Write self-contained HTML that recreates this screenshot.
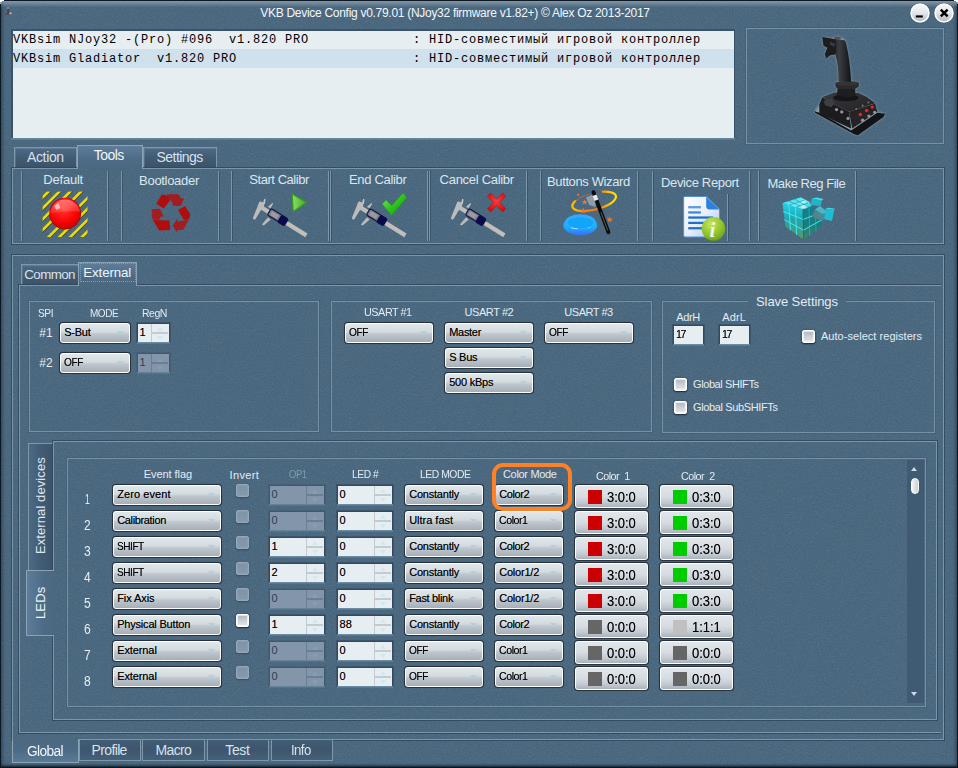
<!DOCTYPE html>
<html lang="en">
<head>
<meta charset="utf-8">
<title>VKB Device Config v0.79.01</title>
<style>
html,body{margin:0;padding:0;}
body{width:958px;height:768px;overflow:hidden;background:#4b687f;font-family:"Liberation Sans",Arial,sans-serif;}
#win{position:relative;width:958px;height:768px;overflow:hidden;background:#4b687f;}
#win div,#win svg,#win span.t{position:absolute;box-sizing:border-box;}
#win span.t{white-space:pre;transform-origin:0 0;display:block;}
.pn{border:1px solid #7b96ab;box-shadow:0 0 0 1px rgba(48,72,94,.85);}
.gb{border:1px solid #7690a5;box-shadow:0 0 0 1px rgba(58,82,104,.35);}
.vs{width:1px;background:#7b95a9;box-shadow:1px 0 0 rgba(48,72,94,.6);}
.tab{border:1px solid #7d96aa;border-bottom:none;background:linear-gradient(#4d6a85 0%,#425c75 45%,#3b5369 100%);box-shadow:inset 1px 1px 0 rgba(150,175,195,.25);}
.tabs{border:1px solid #8ca3b6;border-bottom:none;background:linear-gradient(#5d7d9a 0%,#4d6b86 60%,#4b687f 100%);}
.btab{border:1px solid #7d96aa;border-top:none;background:linear-gradient(#425c75 0%,#3d566d 50%,#45617a 100%);}
.btabs{border:1px solid #8ca3b6;border-top:none;background:linear-gradient(#4b687f 0%,#4d6b86 50%,#5a7a97 100%);}
.cb{border:1px solid rgba(22,33,45,.9);border-radius:4px;background:linear-gradient(#e2e9ec 0%,#d3dade 46%,#c0c7ce 54%,#a3abb5 100%);box-shadow:inset 0 0 0 1px rgba(255,255,255,.95),0 0 .8px rgba(14,24,34,.35);}
.ar{width:0;height:0;border-left:3.5px solid transparent;border-right:3.5px solid transparent;border-top:4px solid #b3d0de;}
.bt{border:1px solid rgba(22,33,45,.9);border-radius:4px;background:linear-gradient(#e1e7eb 0%,#d6dce1 50%,#c2c9d0 76%,#a4acb6 100%);box-shadow:inset 0 0 0 1px rgba(255,255,255,.95),0 0 .8px rgba(14,24,34,.35);}
.ed{background:#e7eef1;box-shadow:-1px -1px 0 1px #3b5369,0 2px 0 0 #6b8ba1,1px 0 0 0 #3b5369;}
.edd{background:#8fa3b5;box-shadow:-1px -1px 0 1px rgba(50,75,98,.6),0 2px 0 0 rgba(107,139,161,.8);}
.ck{border-radius:2px;background:linear-gradient(#7f93a7,#8599ac);border:1px solid #95a8b9;box-shadow:inset 0 0 1px .5px rgba(150,170,187,.7),0 1px 1.5px rgba(25,42,60,.45);}
.ckw{border-radius:2px;background:linear-gradient(#a8b1ba,#c9ced4 45%,#e3e6e9);border:1px solid #fff;box-shadow:inset 0 0 1px 1px rgba(255,255,255,.75),0 1px 1.5px rgba(18,30,44,.8),0 0 1.5px rgba(18,30,44,.6);}
#win span.m{font-family:"Liberation Mono","Courier New",monospace;}

</style>
</head>
<body>
<div id="win">
<svg style="left:0;top:0" width="958" height="768"><defs><filter id="nzw" x="0" y="0" width="100%" height="100%"><feTurbulence type="fractalNoise" baseFrequency="0.75" numOctaves="2" seed="7"/><feColorMatrix type="matrix" values="0 0 0 0 1  0 0 0 0 1  0 0 0 0 1  0.2 0 0 0 -0.1"/></filter><filter id="nzb" x="0" y="0" width="100%" height="100%"><feTurbulence type="fractalNoise" baseFrequency="0.75" numOctaves="2" seed="7"/><feColorMatrix type="matrix" values="0 0 0 0 0  0 0 0 0 0.05  0 0 0 0 0.1  -0.4 0 0 0 0.2"/></filter></defs><rect width="958" height="768" filter="url(#nzw)"/><rect width="958" height="768" filter="url(#nzb)"/></svg>
<div style="left:0px;top:0px;width:958px;height:768px;box-shadow:inset 0 0 0 1px #0c1822,inset 0 0 4px 1px rgba(8,18,28,.75);"></div>
<div style="left:1px;top:1px;width:956px;height:6px;background:linear-gradient(rgba(200,215,228,.55),rgba(200,215,228,0));"></div>
<div style="left:0px;top:764px;width:958px;height:4px;background:linear-gradient(rgba(10,22,32,0),rgba(10,22,32,.25) 40%,rgba(10,22,32,.95));"></div>
<div style="left:0px;top:0px;width:4px;height:1px;background:#fff;"></div>
<div style="left:0px;top:1px;width:2px;height:1px;background:#fff;"></div>
<div style="left:0px;top:2px;width:1px;height:2px;background:#8fb4e6;"></div>
<div style="left:954px;top:0px;width:4px;height:1px;background:#fff;"></div>
<div style="left:956px;top:1px;width:2px;height:1px;background:#fff;"></div>
<div style="left:957px;top:2px;width:1px;height:2px;background:#8fb4e6;"></div>
<svg style="left:5px;top:7px" width="8" height="9" viewBox="0 0 8 9"><rect x="2" y="0" width="2" height="2" fill="#8a8080"/><rect x="2.6" y="2" width="1" height="4" fill="#2a2a2a"/><path d="M0.5 6h6v1.6h-6z" fill="#6a4038"/><rect x="4.5" y="5.6" width="2" height="1.6" fill="#d8d0d0"/></svg>
<span class="t" style="left:260.30px;top:6.00px;font-size:12px;line-height:14px;color:#f3f7fa;letter-spacing:-0.290px;">VKB Device Config v0.79.01 (NJoy32 firmware v1.82+) © Alex Oz 2013-2017</span>
<svg style="left:908.8px;top:1.5px" width="22" height="22" viewBox="0 0 22 22"><defs><linearGradient id="gm" x1="0" y1="0" x2="0" y2="1"><stop offset="0" stop-color="#f4f5f7"/><stop offset=".5" stop-color="#e4e7ea"/><stop offset="1" stop-color="#b2b9c1"/></linearGradient></defs><circle cx="11" cy="11" r="10.3" fill="rgba(30,48,66,.35)"/><circle cx="11" cy="11" r="9.75" fill="#fdfdfd"/><circle cx="11" cy="11" r="8.2" fill="url(#gm)"/><rect x="6.8" y="13.4" width="7" height="2.1" fill="#000"/></svg>
<svg style="left:932.9px;top:1.5px" width="22" height="22" viewBox="0 0 22 22"><defs><linearGradient id="gx" x1="0" y1="0" x2="0" y2="1"><stop offset="0" stop-color="#f4f5f7"/><stop offset=".5" stop-color="#e4e7ea"/><stop offset="1" stop-color="#b2b9c1"/></linearGradient></defs><circle cx="11" cy="11" r="10.3" fill="rgba(30,48,66,.35)"/><circle cx="11" cy="11" r="9.75" fill="#fdfdfd"/><circle cx="11" cy="11" r="8.2" fill="url(#gx)"/><path d="M7.8 7.6 L14.6 14.4 M14.6 7.6 L7.8 14.4" stroke="#000" stroke-width="2.5" stroke-linecap="butt"/></svg>
<div style="left:11px;top:29px;width:724px;height:110px;background:#3b5369;"></div>
<div style="left:11px;top:138px;width:724px;height:2px;background:linear-gradient(#6a8ba1,#587890);"></div>
<div style="left:13px;top:31px;width:721px;height:107px;background:#e7eef1;"></div>
<div style="left:13px;top:49px;width:721px;height:19px;background:#cfe1ec;"></div>
<span class="t m" style="left:13px;top:33px;font-size:12px;letter-spacing:0.8px;line-height:14px;color:#000;">VKBsim NJoy32 -(Pro) #096  v1.820 PRO             : HID-совместимый игровой контроллер</span>
<span class="t m" style="left:13px;top:52px;font-size:12px;letter-spacing:0.8px;line-height:14px;color:#000;">VKBsim Gladiator  v1.820 PRO                      : HID-совместимый игровой контроллер</span>
<div class="gb" style="left:746px;top:28px;width:198px;height:116px;"></div>
<svg style="left:800px;top:28px" width="100" height="117" viewBox="0 0 958 1121">
<defs><filter id="gl" x="-10%" y="-10%" width="120%" height="120%"><feGaussianBlur stdDeviation="10"/></filter>
<linearGradient id="jg" x1="0" y1="0" x2="1" y2="0"><stop offset="0" stop-color="#19191b"/><stop offset=".4" stop-color="#3b3d42"/><stop offset=".7" stop-color="#26272a"/><stop offset="1" stop-color="#121214"/></linearGradient>
<linearGradient id="jt" x1="0" y1="0" x2="1" y2="1"><stop offset="0" stop-color="#3a3a3e"/><stop offset="1" stop-color="#222225"/></linearGradient></defs>
<g fill="#c8d6e0" filter="url(#gl)" opacity=".5">
<path d="M140 797L185 735L215 662L330 617L560 622L640 662L720 722L740 802L815 822L800 852L555 1027L520 1017L145 812Z"/>
<path d="M213 86L300 100L330 92L365 80L400 95L435 118L445 160Q478 300 490 510L565 525L562 560L528 585L532 645L560 662L560 700L320 700L320 655L352 640L360 585L340 560L338 525L370 510Q370 350 340 255L290 262L250 292L238 250L262 190L225 170Z"/>
</g>
<path d="M140 797L185 812L490 982L740 812L815 822L800 852L555 1027L520 1017L145 812Z" fill="#131315"/>
<path d="M185 732L215 664L330 732L470 802L490 962L185 822Z" fill="#1c1c1f"/>
<path d="M470 802L720 724L740 802L500 962Z" fill="#242427"/>
<path d="M215 662L330 617L560 622L640 662L720 722L470 802L330 732Z" fill="url(#jt)"/>
<path d="M225 700L300 672L330 720L300 760L240 740Z" fill="#3e3f44"/>
<ellipse cx="440" cy="668" rx="122" ry="34" fill="#151517"/>
<path d="M352 640L360 585L528 585L532 645Q440 690 352 640Z" fill="#1e1e21"/>
<path d="M338 525L565 525L562 560L528 585L360 585L340 560Z" fill="#2a2a2d"/>
<ellipse cx="452" cy="530" rx="113" ry="22" fill="#343438"/>
<path d="M300 150L330 100L432 120L445 160Q478 300 490 515L370 515Q370 350 340 255Z" fill="url(#jg)"/>
<path d="M213 86L300 100L340 110L345 200L340 255L290 262L250 292L238 250L262 190L225 170Z" fill="#1d1d1f"/>
<path d="M290 130L335 150L330 180L285 160Z" fill="#3a3b40"/>
<ellipse cx="360" cy="97" rx="33" ry="15" fill="#505257"/>
<g fill="#8d959f"><circle cx="350" cy="782" r="16"/><circle cx="400" cy="804" r="16"/><circle cx="460" cy="866" r="15"/><circle cx="600" cy="884" r="17"/><circle cx="660" cy="844" r="16"/><circle cx="715" cy="808" r="15"/>
<circle cx="540" cy="776" r="10" fill="#6d747d"/><circle cx="600" cy="744" r="10" fill="#6d747d"/><circle cx="655" cy="714" r="10" fill="#6d747d"/></g>
<g fill="#ee2222"><circle cx="578" cy="828" r="17"/><circle cx="638" cy="791" r="17"/><circle cx="692" cy="758" r="16"/></g>
</svg>

<div class="tab" style="left:14px;top:147px;width:63px;height:21px;"></div>
<div class="tab" style="left:143px;top:147px;width:74px;height:21px;"></div>
<div class="pn" style="left:12px;top:168px;width:932px;height:76px;"></div>
<div class="tabs" style="left:77px;top:145px;width:66px;height:24px;"></div>
<span class="t" style="left:27.00px;top:149.00px;font-size:14px;line-height:16px;color:#d8e2eb;letter-spacing:-0.365px;">Action</span>
<span class="t" style="left:93.80px;top:147.00px;font-size:14px;line-height:16px;color:#f0f5f9;letter-spacing:-0.546px;">Tools</span>
<span class="t" style="left:156.50px;top:149.00px;font-size:14px;line-height:16px;color:#d8e2eb;letter-spacing:-0.541px;">Settings</span>
<div class="vs" style="left:21px;top:171px;width:1px;height:70px;"></div>
<div class="vs" style="left:107px;top:171px;width:1px;height:70px;"></div>
<div class="vs" style="left:121px;top:171px;width:1px;height:70px;"></div>
<div class="vs" style="left:218px;top:171px;width:1px;height:70px;"></div>
<div class="vs" style="left:231px;top:171px;width:1px;height:70px;"></div>
<div class="vs" style="left:328px;top:171px;width:1px;height:70px;"></div>
<div class="vs" style="left:330px;top:171px;width:1px;height:70px;"></div>
<div class="vs" style="left:427px;top:171px;width:1px;height:70px;"></div>
<div class="vs" style="left:429px;top:171px;width:1px;height:70px;"></div>
<div class="vs" style="left:526px;top:171px;width:1px;height:70px;"></div>
<div class="vs" style="left:540px;top:171px;width:1px;height:70px;"></div>
<div class="vs" style="left:637px;top:171px;width:1px;height:70px;"></div>
<div class="vs" style="left:652px;top:171px;width:1px;height:70px;"></div>
<div class="vs" style="left:749px;top:171px;width:1px;height:70px;"></div>
<div class="vs" style="left:758px;top:171px;width:1px;height:70px;"></div>
<div class="vs" style="left:855px;top:171px;width:1px;height:70px;"></div>
<div class="vs" style="left:727px;top:194px;width:1px;height:47px;"></div>
<span class="t" style="left:43.30px;top:172.00px;font-size:13px;line-height:15px;color:#dbe6ee;letter-spacing:-0.213px;">Default</span>
<span class="t" style="left:139.10px;top:173.00px;font-size:13px;line-height:15px;color:#dbe6ee;letter-spacing:-0.306px;">Bootloader</span>
<span class="t" style="left:249.30px;top:172.00px;font-size:13px;line-height:15px;color:#dbe6ee;letter-spacing:-0.454px;">Start Calibr</span>
<span class="t" style="left:349.00px;top:172.00px;font-size:13px;line-height:15px;color:#dbe6ee;letter-spacing:-0.319px;">End Calibr</span>
<span class="t" style="left:439.60px;top:172.00px;font-size:13px;line-height:15px;color:#dbe6ee;letter-spacing:-0.292px;">Cancel Calibr</span>
<span class="t" style="left:547.00px;top:174.00px;font-size:13px;line-height:15px;color:#dbe6ee;letter-spacing:-0.378px;">Buttons Wizard</span>
<span class="t" style="left:661.00px;top:175.00px;font-size:13px;line-height:15px;color:#dbe6ee;letter-spacing:-0.355px;">Device Report</span>
<span class="t" style="left:767.50px;top:176.00px;font-size:13px;line-height:15px;color:#dbe6ee;letter-spacing:-0.465px;">Make Reg File</span>
<svg style="left:30px;top:185px" width="80" height="60" viewBox="0 0 958 718">
<defs>
<clipPath id="hz"><rect x="150" y="78" width="540" height="545"/></clipPath>
<radialGradient id="rb" cx="0.45" cy="0.35" r="0.75"><stop offset="0" stop-color="#ff3a30"/><stop offset=".55" stop-color="#fb0505"/><stop offset="1" stop-color="#b80000"/></radialGradient>
<linearGradient id="rbh" x1="0" y1="0" x2="0" y2="1"><stop offset="0" stop-color="#fff" stop-opacity=".4"/><stop offset="1" stop-color="#fff" stop-opacity=".08"/></linearGradient>
</defs>
<g clip-path="url(#hz)" stroke-linecap="butt">
<g stroke="#3d3a10" stroke-width="38" transform="translate(3,4)">
<path d="M100 200L300 0M100 330L430 0M100 460L560 0M100 590L690 0M110 735L720 125M240 735L720 255M370 735L720 385M510 735L720 525"/>
</g>
<g stroke="#ecdb05" stroke-width="32">
<path d="M100 200L300 0M100 330L430 0M100 460L560 0M100 590L690 0M110 735L720 125M240 735L720 255M370 735L720 385M510 735L720 525"/>
</g>
</g>
<circle cx="421" cy="342" r="190" fill="#8a0a0a"/>
<circle cx="421" cy="340" r="184" fill="url(#rb)"/>
<path d="M245 330 A180 180 0 0 1 600 320 Q420 300 245 345Z" fill="url(#rbh)"/>
<path d="M290 250L340 215L365 275L315 300Z" fill="#fff" fill-opacity=".6"/>
</svg>
<svg style="left:130px;top:185px" width="80" height="60" viewBox="0 0 958 718">
<g fill="#b20d0d">
<path d="M378 118Q420 112 448 128Q472 150 482 178L405 282L315 228Z"/>
<path d="M575 300L660 250L718 345Q722 365 714 392L660 420L640 410Z"/>
<path d="M275 420L475 425L480 540L350 545Z"/>
</g>
<g fill="#a11d20">
<path d="M440 110L580 110L610 160L650 155L605 250L500 245L515 225L478 165Z"/>
<path d="M715 392L640 535L570 540L565 572L512 487L565 405L570 437L660 422Z"/>
<path d="M255 290L355 285L402 375L366 380L350 415L275 415L260 370L268 320Z"/>
</g>
</svg>
<svg style="left:240px;top:185px" width="80" height="60" viewBox="0 0 958 718">
<g>
<path d="M262 272L795 603" stroke="#c2beba" stroke-width="52"/>
<path d="M262 290L780 612" stroke="#aaa6a4" stroke-width="8" stroke-dasharray="4 14"/>
<path d="M240 195L292 215L285 282L250 302L180 415L155 405L160 380L205 270L225 215Z" fill="#bcbcbc"/>
<path d="M290 165L306 172L298 226L276 218Z" fill="#c6c6c6"/>
<path d="M388 215L397 225L366 276L334 262Z" fill="#c2c2c2"/>
<path d="M336 385L368 412L285 486L262 472Z" fill="#bababa"/>
<g transform="translate(425,366) rotate(32)">
<rect x="-88" y="-45" width="180" height="90" rx="22" fill="#7c7c88" stroke="#15153f" stroke-width="14"/>
<rect x="-62" y="-26" width="95" height="52" rx="6" fill="#9a9aa4"/>
<rect x="55" y="-52" width="105" height="108" rx="26" fill="#0b0b4c"/>
</g>
</g>
<defs><linearGradient id="pl" x1="0" y1="0" x2="1" y2="0"><stop offset="0" stop-color="#8fdc6a"/><stop offset="1" stop-color="#3fae1d"/></linearGradient></defs>
<path d="M625 108L792 210L638 318Z" fill="url(#pl)" stroke="#38a018" stroke-width="14" stroke-linejoin="round"/>
</svg>
<svg style="left:339px;top:185px" width="80" height="60" viewBox="0 0 958 718">
<g>
<path d="M262 272L795 603" stroke="#c2beba" stroke-width="52"/>
<path d="M262 290L780 612" stroke="#aaa6a4" stroke-width="8" stroke-dasharray="4 14"/>
<path d="M240 195L292 215L285 282L250 302L180 415L155 405L160 380L205 270L225 215Z" fill="#bcbcbc"/>
<path d="M290 165L306 172L298 226L276 218Z" fill="#c6c6c6"/>
<path d="M388 215L397 225L366 276L334 262Z" fill="#c2c2c2"/>
<path d="M336 385L368 412L285 486L262 472Z" fill="#bababa"/>
<g transform="translate(425,366) rotate(32)">
<rect x="-88" y="-45" width="180" height="90" rx="22" fill="#7c7c88" stroke="#15153f" stroke-width="14"/>
<rect x="-62" y="-26" width="95" height="52" rx="6" fill="#9a9aa4"/>
<rect x="55" y="-52" width="105" height="108" rx="26" fill="#0b0b4c"/>
</g>
</g>
<g transform="translate(12,0)"><defs><linearGradient id="ck" x1="0" y1="0" x2="1" y2="1"><stop offset="0" stop-color="#7be868"/><stop offset=".5" stop-color="#2fc41c"/><stop offset="1" stop-color="#138c08"/></linearGradient></defs>
<path d="M505 228L550 180L620 245L755 97L800 150L618 365Z" fill="url(#ck)" stroke="#1c9a10" stroke-width="6" stroke-linejoin="round"/></g>
</svg>
<svg style="left:438px;top:185px" width="80" height="60" viewBox="0 0 958 718">
<g>
<path d="M262 272L795 603" stroke="#c2beba" stroke-width="52"/>
<path d="M262 290L780 612" stroke="#aaa6a4" stroke-width="8" stroke-dasharray="4 14"/>
<path d="M240 195L292 215L285 282L250 302L180 415L155 405L160 380L205 270L225 215Z" fill="#bcbcbc"/>
<path d="M290 165L306 172L298 226L276 218Z" fill="#c6c6c6"/>
<path d="M388 215L397 225L366 276L334 262Z" fill="#c2c2c2"/>
<path d="M336 385L368 412L285 486L262 472Z" fill="#bababa"/>
<g transform="translate(425,366) rotate(32)">
<rect x="-88" y="-45" width="180" height="90" rx="22" fill="#7c7c88" stroke="#15153f" stroke-width="14"/>
<rect x="-62" y="-26" width="95" height="52" rx="6" fill="#9a9aa4"/>
<rect x="55" y="-52" width="105" height="108" rx="26" fill="#0b0b4c"/>
</g>
</g>
<g transform="translate(24,0)"><defs><radialGradient id="xr" cx=".5" cy=".4" r=".7"><stop offset="0" stop-color="#ff3a3a"/><stop offset="1" stop-color="#d30606"/></radialGradient></defs>
<path d="M568 133L606 97L677 170L748 97L788 133L715 208L788 283L748 322L677 246L606 322L568 283L640 208Z" fill="url(#xr)" stroke="#b80808" stroke-width="6" stroke-linejoin="round"/></g>
</svg>
<svg style="left:550px;top:185px" width="80" height="60" viewBox="0 0 958 718">
<defs>
<linearGradient id="rg" x1="0" y1="0" x2="1" y2="0"><stop offset="0" stop-color="#ffc000"/><stop offset=".3" stop-color="#ff8a00"/><stop offset=".6" stop-color="#ff7200"/><stop offset=".85" stop-color="#ffc800"/><stop offset="1" stop-color="#ffe600"/></linearGradient>
<linearGradient id="dk" x1="0" y1="0" x2="0" y2="1"><stop offset="0" stop-color="#2aa6ff"/><stop offset=".6" stop-color="#1ab0ff"/><stop offset="1" stop-color="#3d6df2"/></linearGradient>
<linearGradient id="wd" x1="0" y1="0" x2="1" y2="0"><stop offset="0" stop-color="#000"/><stop offset=".6" stop-color="#555"/><stop offset="1" stop-color="#111"/></linearGradient>
</defs>
<ellipse cx="362" cy="482" rx="203" ry="118" fill="url(#dk)"/>
<ellipse cx="365" cy="442" rx="180" ry="92" fill="#2fadff"/>
<ellipse cx="365" cy="452" rx="152" ry="66" fill="#12a6fa"/>
<path d="M255 512Q290 528 325 524" stroke="#d8f0ff" stroke-width="9" fill="none" stroke-linecap="round"/><circle cx="468" cy="510" r="7" fill="#d8f0ff"/>
<path d="M430 150L520 110L548 190L545 262L470 240Z" fill="#aab4be" fill-opacity=".7"/>
<path d="M631 79A268 100 -14 1 1 303 192" fill="none" stroke="url(#rg)" stroke-width="26" stroke-linecap="round"/><path d="M303 192A268 100 -14 0 1 470 108" fill="none" stroke="#e07a18" stroke-width="9" stroke-linecap="round" stroke-opacity=".8"/>
<path d="M520 85L700 565" stroke="#0c0c0c" stroke-width="46" stroke-linecap="round"/>
<path d="M612 330L690 540" stroke="#666" stroke-width="10" stroke-linecap="round"/>
<path d="M533 122L556 182" stroke="#e9e9e9" stroke-width="50"/>
<g fill="#f0742a">
<path d="M415 170L424 192L448 194L430 210L436 234L415 221L394 234L400 210L382 194L406 192Z"/>
<path d="M400 272L410 296L436 298L416 315L422 340L400 326L378 340L384 315L364 298L390 296Z"/>
<path d="M715 375L726 400L754 402L733 420L739 447L715 432L691 447L697 420L676 402L704 400Z"/>
<circle cx="336" cy="118" r="13"/>
</g>
</svg>
<svg style="left:660px;top:185px" width="80" height="60" viewBox="0 0 958 718">
<defs>
<linearGradient id="pg" x1="0" y1="0" x2="1" y2="1"><stop offset="0" stop-color="#ffffff"/><stop offset=".5" stop-color="#e8eff9"/><stop offset="1" stop-color="#a9c4ea"/></linearGradient>
<radialGradient id="gb" cx=".4" cy=".3" r=".8"><stop offset="0" stop-color="#c6e85c"/><stop offset=".6" stop-color="#8fc02a"/><stop offset="1" stop-color="#5f9618"/></radialGradient>
</defs>
<path d="M300 138H555L712 290V605Q712 622 695 622H300Q283 622 283 605V155Q283 138 300 138Z" fill="url(#pg)" stroke="#4a90e2" stroke-width="12"/>
<path d="M553 142L708 292H590Q553 292 553 255Z" fill="#2e80da"/>
<g fill="#1c6fd2">
<rect x="338" y="252" width="152" height="28" fill="#5c9ce0"/>
<rect x="338" y="315" width="152" height="27" fill="#3f88dc"/>
<rect x="338" y="376" width="298" height="27"/>
<rect x="338" y="440" width="200" height="27"/>
<rect x="338" y="504" width="180" height="27"/>
</g>
<ellipse cx="640" cy="655" rx="110" ry="14" fill="#4a8a1a" fill-opacity=".6"/>
<circle cx="640" cy="525" r="141" fill="url(#gb)"/>
<text x="592" y="620" font-family="'Liberation Serif',serif" font-style="italic" font-weight="bold" font-size="255" fill="#f2f2ee">i</text>
</svg>
<svg style="left:770px;top:185px" width="80" height="60" viewBox="0 0 958 718">
<defs>
<linearGradient id="c1" x1="0" y1="0" x2="0" y2="1"><stop offset="0" stop-color="#20d4e8"/><stop offset=".45" stop-color="#27a3aa"/><stop offset="1" stop-color="#56996a"/></linearGradient>
<linearGradient id="c2" x1="0" y1="0" x2="0" y2="1"><stop offset="0" stop-color="#10808f"/><stop offset=".6" stop-color="#1d7c7c"/><stop offset="1" stop-color="#3c8a6c"/></linearGradient>
<linearGradient id="c3" x1="0" y1="0" x2="1" y2="1"><stop offset="0" stop-color="#1fd0e6"/><stop offset=".55" stop-color="#6ff2fa"/><stop offset="1" stop-color="#1fbfd4"/></linearGradient>
<radialGradient id="c4" cx=".5" cy=".5" r=".5"><stop offset="0" stop-color="#fff" stop-opacity=".95"/><stop offset="1" stop-color="#fff" stop-opacity="0"/></radialGradient>
</defs>
<path d="M150 215L395 292L402 652L185 497Z" fill="url(#c1)"/>
<path d="M395 292L500 250L618 430L615 492L402 652Z" fill="url(#c2)"/>
<path d="M150 215L368 146L470 200L500 250L395 292Z" fill="url(#c3)"/>
<g stroke="#0e8496" stroke-width="9" stroke-opacity=".7" fill="none">
<path d="M232 241L412 181M313 266L456 215M223 192L430 278M295 169L465 264"/>
</g>
<ellipse cx="402" cy="262" rx="58" ry="30" fill="url(#c4)"/>
<ellipse cx="400" cy="205" rx="40" ry="20" fill="url(#c4)" opacity=".8"/>
<g stroke="#38f2fb" stroke-width="12" fill="none" stroke-opacity=".9">
<path d="M160 318L398 412L612 330"/><path d="M172 415L400 540L615 420"/>
<path d="M225 240L245 540"/><path d="M305 265L318 595"/>
</g>
<g stroke="#2bd0dc" stroke-width="8" fill="none" stroke-opacity=".7"><path d="M468 268L474 600M545 345L550 545"/></g>
<path d="M395 292L402 652" stroke="#0a5a66" stroke-width="8" stroke-opacity=".8"/>
<path d="M500 160L622 185L605 252L485 240Z" fill="#22b5ca"/>
<path d="M500 160L560 150L640 168L622 185Z" fill="#3fdcec"/>
<path d="M540 290L600 252L692 330L632 432L505 377Z" fill="#3f8fa0"/>
<path d="M505 377L540 290L632 432Z" fill="#5b8088"/>
<path d="M540 290L600 252L692 330L625 345Z" fill="#4fb4c6"/>
<path d="M665 280L770 295L742 432L650 410Z" fill="#1fbcd2"/>
<path d="M665 280L700 272L775 285L770 295Z" fill="#45deee"/>
</svg>

<div class="pn" style="left:12px;top:255px;width:932px;height:485px;"></div>
<div class="btabs" style="left:12px;top:739px;width:67px;height:24px;"></div>
<div class="btab" style="left:79px;top:740px;width:62px;height:21px;"></div>
<div class="btab" style="left:142px;top:740px;width:63px;height:21px;"></div>
<div class="btab" style="left:207px;top:740px;width:62px;height:21px;"></div>
<div class="btab" style="left:271px;top:740px;width:62px;height:21px;"></div>
<span class="t" style="left:27.30px;top:743.00px;font-size:14px;line-height:16px;color:#f0f5f9;letter-spacing:-0.630px;transform:scaleX(0.9810);">Global</span>
<span class="t" style="left:91.50px;top:742.00px;font-size:14px;line-height:16px;color:#d8e2eb;letter-spacing:-0.630px;">Profile</span>
<span class="t" style="left:155.50px;top:742.00px;font-size:14px;line-height:16px;color:#d8e2eb;letter-spacing:-0.630px;">Macro</span>
<span class="t" style="left:225.30px;top:742.00px;font-size:14px;line-height:16px;color:#d8e2eb;letter-spacing:-0.362px;">Test</span>
<span class="t" style="left:291.36px;top:742.00px;font-size:14px;line-height:16px;color:#d8e2eb;letter-spacing:-0.630px;transform:scaleX(0.9431);">Info</span>
<div class="tab" style="left:21px;top:264px;width:58px;height:21px;"></div>
<div class="pn" style="left:19px;top:285px;width:922px;height:448px;border-right:none;clip-path:inset(-1px 0 -1px -1px);"></div>
<div class="tabs" style="left:78px;top:262px;width:59px;height:24px;"></div>
<div style="left:80px;top:263px;width:56px;height:19px;border:1px dotted #c48a62;"></div>
<span class="t" style="left:24.30px;top:267.00px;font-size:13.333px;line-height:15px;color:#d8e2eb;letter-spacing:-0.591px;">Common</span>
<span class="t" style="left:83.30px;top:265.00px;font-size:13.333px;line-height:15px;color:#f0f5f9;letter-spacing:-0.133px;">External</span>
<div class="gb" style="left:29px;top:301px;width:290px;height:131px;"></div>
<span class="t" style="left:38.30px;top:307.00px;font-size:11px;line-height:12px;color:#e3ecf3;letter-spacing:-0.495px;transform:scaleX(0.9290);">SPI</span>
<span class="t" style="left:89.50px;top:307.00px;font-size:11px;line-height:12px;color:#e3ecf3;letter-spacing:-0.495px;transform:scaleX(0.9077);">MODE</span>
<span class="t" style="left:142.00px;top:307.00px;font-size:11px;line-height:12px;color:#e3ecf3;letter-spacing:-0.495px;transform:scaleX(0.9553);">RegN</span>
<span class="t" style="left:39.30px;top:326.00px;font-size:12px;line-height:14px;color:#e3ecf3;letter-spacing:0.026px;">#1</span>
<span class="t" style="left:39.30px;top:356.00px;font-size:12px;line-height:14px;color:#e3ecf3;letter-spacing:0.026px;">#2</span>
<div class="cb" style="left:59px;top:322px;width:72px;height:22px;"></div><div class="ar" style="left:117px;top:331px;width:7px;height:4px;"></div><span class="t" style="left:64.20px;top:326.00px;font-size:11px;line-height:12px;color:#000;letter-spacing:-0.239px;text-shadow:0 0 .4px rgba(0,0,0,.5);">S-But</span>
<div class="cb" style="left:59px;top:352px;width:72px;height:22px;"></div><div class="ar" style="left:117px;top:361px;width:7px;height:4px;"></div><span class="t" style="left:64.20px;top:356.00px;font-size:11px;line-height:12px;color:#000;letter-spacing:-0.495px;text-shadow:0 0 .4px rgba(0,0,0,.5);transform:scaleX(0.9208);">OFF</span>
<div style="left:137px;top:323px;width:33px;height:19px;background:#34495d;box-shadow:0 0 0 1px rgba(46,68,90,.5);"></div><div style="left:137px;top:342px;width:33px;height:1px;background:#6b8ca3;box-shadow:0 1px 0 rgba(107,140,163,.45);"></div><div style="left:138px;top:324px;width:31px;height:18px;background:#e7eef1;"></div><div style="left:151px;top:324px;width:1px;height:18px;background:#c3cbcf;"></div><div style="left:152px;top:332px;width:16px;height:2px;background:#c3cbcf;"></div><div style="left:157px;top:327px;width:7px;height:4px;border-left:3.5px solid transparent;border-right:3.5px solid transparent;border-bottom:4px solid #cfe8f2;width:0;height:0;"></div><div style="left:157px;top:336px;width:7px;height:4px;border-left:3.5px solid transparent;border-right:3.5px solid transparent;border-top:4px solid #cfe8f2;width:0;height:0;"></div><span class="t" style="left:139.60px;top:326.00px;font-size:11px;line-height:12px;color:#000;text-shadow:0 0 .4px rgba(0,0,0,.5);">1</span>
<div style="left:137px;top:353px;width:33px;height:19px;background:rgba(52,76,98,.55);box-shadow:0 0 0 1px rgba(52,76,98,.25);"></div><div style="left:137px;top:372px;width:33px;height:1px;background:rgba(110,142,164,.75);box-shadow:0 1px 0 rgba(110,142,164,.3);"></div><div style="left:138px;top:354px;width:31px;height:18px;background:#8396a9;"></div><div style="left:151px;top:354px;width:1px;height:18px;background:rgba(60,85,108,.35);"></div><div style="left:152px;top:362px;width:16px;height:2px;background:rgba(60,85,108,.35);"></div><div style="left:157px;top:358px;width:7px;height:4px;border-left:3.5px solid transparent;border-right:3.5px solid transparent;border-bottom:4px solid rgba(150,180,200,.28);width:0;height:0;"></div><div style="left:157px;top:366px;width:7px;height:4px;border-left:3.5px solid transparent;border-right:3.5px solid transparent;border-top:4px solid rgba(150,180,200,.28);width:0;height:0;"></div><span class="t" style="left:139.60px;top:356.00px;font-size:11px;line-height:12px;color:#2b3d52;">1</span>
<div class="gb" style="left:331px;top:301px;width:321px;height:131px;"></div>
<span class="t" style="left:364.30px;top:306.00px;font-size:11px;line-height:12px;color:#e3ecf3;letter-spacing:-0.495px;transform:scaleX(0.9879);">USART #1</span>
<span class="t" style="left:464.50px;top:306.00px;font-size:11px;line-height:12px;color:#e3ecf3;letter-spacing:-0.422px;">USART #2</span>
<span class="t" style="left:564.30px;top:306.00px;font-size:11px;line-height:12px;color:#e3ecf3;letter-spacing:-0.465px;">USART #3</span>
<div class="cb" style="left:344px;top:322px;width:90px;height:22px;"></div><div class="ar" style="left:420px;top:331px;width:7px;height:4px;"></div><span class="t" style="left:349.20px;top:326.00px;font-size:11px;line-height:12px;color:#000;letter-spacing:-0.495px;text-shadow:0 0 .4px rgba(0,0,0,.5);transform:scaleX(0.9208);">OFF</span>
<div class="cb" style="left:444px;top:322px;width:90px;height:22px;"></div><div class="ar" style="left:520px;top:331px;width:7px;height:4px;"></div><span class="t" style="left:449.20px;top:326.00px;font-size:11px;line-height:12px;color:#000;letter-spacing:-0.291px;text-shadow:0 0 .4px rgba(0,0,0,.5);">Master</span>
<div class="cb" style="left:444px;top:347px;width:90px;height:22px;"></div><div class="ar" style="left:520px;top:356px;width:7px;height:4px;"></div><span class="t" style="left:449.20px;top:351.00px;font-size:11px;line-height:12px;color:#000;letter-spacing:-0.262px;text-shadow:0 0 .4px rgba(0,0,0,.5);">S Bus</span>
<div class="cb" style="left:444px;top:372px;width:90px;height:22px;"></div><div class="ar" style="left:520px;top:381px;width:7px;height:4px;"></div><span class="t" style="left:449.20px;top:376.00px;font-size:11px;line-height:12px;color:#000;letter-spacing:-0.223px;text-shadow:0 0 .4px rgba(0,0,0,.5);">500 kBps</span>
<div class="cb" style="left:544px;top:322px;width:90px;height:22px;"></div><div class="ar" style="left:620px;top:331px;width:7px;height:4px;"></div><span class="t" style="left:549.20px;top:326.00px;font-size:11px;line-height:12px;color:#000;letter-spacing:-0.495px;text-shadow:0 0 .4px rgba(0,0,0,.5);transform:scaleX(0.9208);">OFF</span>
<div class="gb" style="left:662px;top:301px;width:273px;height:132px;"></div>
<div style="left:748px;top:298px;width:98px;height:8px;background:#4b687f;"></div>
<span class="t" style="left:756.00px;top:294.00px;font-size:13px;line-height:15px;color:#e3ecf3;letter-spacing:-0.085px;">Slave Settings</span>
<span class="t" style="left:676.20px;top:311.00px;font-size:11px;line-height:12px;color:#e3ecf3;letter-spacing:-0.339px;">AdrH</span>
<span class="t" style="left:722.20px;top:311.00px;font-size:11px;line-height:12px;color:#e3ecf3;letter-spacing:0.127px;">AdrL</span>
<div style="left:673px;top:325px;width:31px;height:19px;background:#34495d;box-shadow:0 0 0 1px rgba(46,68,90,.5);"></div><div style="left:673px;top:344px;width:31px;height:1px;background:#6b8ca3;box-shadow:0 1px 0 rgba(107,140,163,.45);"></div><div style="left:674px;top:326px;width:29px;height:18px;background:#e7eef1;"></div>
<span class="t" style="left:675.90px;top:328.00px;font-size:11px;line-height:12px;color:#000;letter-spacing:-1.320px;text-shadow:0 0 .4px rgba(0,0,0,.5);transform:scaleX(0.9632);">17</span>
<div style="left:719px;top:325px;width:31px;height:19px;background:#34495d;box-shadow:0 0 0 1px rgba(46,68,90,.5);"></div><div style="left:719px;top:344px;width:31px;height:1px;background:#6b8ca3;box-shadow:0 1px 0 rgba(107,140,163,.45);"></div><div style="left:720px;top:326px;width:29px;height:18px;background:#e7eef1;"></div>
<span class="t" style="left:721.90px;top:328.00px;font-size:11px;line-height:12px;color:#000;letter-spacing:-1.320px;text-shadow:0 0 .4px rgba(0,0,0,.5);transform:scaleX(0.9632);">17</span>
<div class="ckw" style="left:802px;top:330px;width:13px;height:13px;"></div>
<span class="t" style="left:821.00px;top:330.00px;font-size:11px;line-height:12px;color:#e3ecf3;letter-spacing:0.037px;">Auto-select registers</span>
<div class="ckw" style="left:674px;top:378px;width:13px;height:13px;"></div>
<span class="t" style="left:693.00px;top:378.00px;font-size:11px;line-height:12px;color:#e3ecf3;letter-spacing:-0.409px;">Global SHIFTs</span>
<div class="ckw" style="left:674px;top:401px;width:13px;height:13px;"></div>
<span class="t" style="left:693.00px;top:401.00px;font-size:11px;line-height:12px;color:#e3ecf3;letter-spacing:-0.365px;">Global SubSHIFTs</span>
<div style="left:28px;top:443px;width:26px;height:128px;border:1px solid #7d96aa;border-right:none;background:linear-gradient(90deg,#4d6a85 0%,#425c75 45%,#3b5369 100%);"></div>
<div class="pn" style="left:53px;top:441px;width:884px;height:279px;"></div>
<div style="left:26px;top:570px;width:28px;height:66px;border:1px solid #8ca3b6;border-right:none;background:linear-gradient(90deg,#5d7d9a 0%,#4d6b86 60%,#4b687f 100%);"></div>
<span class="t" style="left:32.5px;top:553.6px;font-size:13px;line-height:16px;letter-spacing:0.09px;color:#dde7ef;transform:rotate(-90deg);transform-origin:0 0;">External devices</span>
<span class="t" style="left:32.5px;top:618.7px;font-size:13px;line-height:16px;letter-spacing:0.13px;color:#eef3f7;transform:rotate(-90deg);transform-origin:0 0;">LEDs</span>
<div class="gb" style="left:67px;top:458px;width:859px;height:249px;"></div>
<div style="left:907px;top:460px;width:17px;height:243px;background:#3f5a72;"></div>
<div style="left:911px;top:467px;width:7px;height:4px;border-left:3.5px solid transparent;border-right:3.5px solid transparent;border-bottom:4px solid #c5dbe8;width:0;height:0;"></div>
<div style="left:911px;top:692px;width:7px;height:4px;border-left:3.5px solid transparent;border-right:3.5px solid transparent;border-top:4px solid #c5dbe8;width:0;height:0;"></div>
<div style="left:910.5px;top:478px;width:8.5px;height:15.5px;border-radius:4.5px;background:linear-gradient(90deg,#f2f4f6,#c9cfd6);border:1px solid #fff;"></div>
<span class="t" style="left:143.80px;top:468.00px;font-size:11px;line-height:12px;color:#e3ecf3;letter-spacing:-0.067px;">Event flag</span>
<span class="t" style="left:229.60px;top:469.00px;font-size:11px;line-height:12px;color:#e3ecf3;letter-spacing:0.349px;">Invert</span>
<span class="t" style="left:288.80px;top:468.00px;font-size:11px;line-height:12px;color:#7f9bb0;letter-spacing:-0.495px;transform:scaleX(0.8611);">OP1</span>
<span class="t" style="left:352.00px;top:468.00px;font-size:11px;line-height:12px;color:#e3ecf3;letter-spacing:-0.495px;transform:scaleX(0.9330);">LED #</span>
<span class="t" style="left:420.00px;top:468.00px;font-size:11px;line-height:12px;color:#e3ecf3;letter-spacing:-0.495px;transform:scaleX(0.9412);">LED MODE</span>
<span class="t" style="left:503.00px;top:468.00px;font-size:11px;line-height:12px;color:#e3ecf3;letter-spacing:-0.327px;">Color Mode</span>
<span class="t" style="left:595.50px;top:470.00px;font-size:11px;line-height:12px;color:#e3ecf3;letter-spacing:-0.495px;transform:scaleX(0.9733);">Color  1</span>
<span class="t" style="left:680.50px;top:470.00px;font-size:11px;line-height:12px;color:#e3ecf3;letter-spacing:-0.495px;transform:scaleX(0.9733);">Color  2</span>
<span class="t" style="left:84.59px;top:491.00px;font-size:14px;line-height:16px;color:#e6eef4;transform:scaleX(0.6143);">1</span>
<div class="cb" style="left:112px;top:484px;width:110px;height:22px;"></div><div class="ar" style="left:208px;top:493px;width:7px;height:4px;"></div><span class="t" style="left:117.20px;top:488.00px;font-size:11px;line-height:12px;color:#000;letter-spacing:0.075px;text-shadow:0 0 .4px rgba(0,0,0,.5);">Zero event</span>
<div class="ck" style="left:236px;top:484px;width:13px;height:13px;"></div>
<div style="left:269px;top:485px;width:56px;height:19px;background:rgba(52,76,98,.55);box-shadow:0 0 0 1px rgba(52,76,98,.25);"></div><div style="left:269px;top:504px;width:56px;height:1px;background:rgba(110,142,164,.75);box-shadow:0 1px 0 rgba(110,142,164,.3);"></div><div style="left:270px;top:486px;width:54px;height:18px;background:#8396a9;"></div><div style="left:306px;top:486px;width:1px;height:18px;background:rgba(60,85,108,.35);"></div><div style="left:307px;top:494px;width:16px;height:2px;background:rgba(60,85,108,.35);"></div><div style="left:312px;top:490px;width:7px;height:4px;border-left:3.5px solid transparent;border-right:3.5px solid transparent;border-bottom:4px solid rgba(150,180,200,.28);width:0;height:0;"></div><div style="left:312px;top:498px;width:7px;height:4px;border-left:3.5px solid transparent;border-right:3.5px solid transparent;border-top:4px solid rgba(150,180,200,.28);width:0;height:0;"></div><span class="t" style="left:271.60px;top:488.00px;font-size:11px;line-height:12px;color:#2b3d52;">0</span>
<div style="left:337px;top:485px;width:56px;height:19px;background:#34495d;box-shadow:0 0 0 1px rgba(46,68,90,.5);"></div><div style="left:337px;top:504px;width:56px;height:1px;background:#6b8ca3;box-shadow:0 1px 0 rgba(107,140,163,.45);"></div><div style="left:338px;top:486px;width:54px;height:18px;background:#e7eef1;"></div><div style="left:374px;top:486px;width:1px;height:18px;background:#c3cbcf;"></div><div style="left:375px;top:494px;width:16px;height:2px;background:#c3cbcf;"></div><div style="left:380px;top:489px;width:7px;height:4px;border-left:3.5px solid transparent;border-right:3.5px solid transparent;border-bottom:4px solid #cfe8f2;width:0;height:0;"></div><div style="left:380px;top:498px;width:7px;height:4px;border-left:3.5px solid transparent;border-right:3.5px solid transparent;border-top:4px solid #cfe8f2;width:0;height:0;"></div><span class="t" style="left:339.60px;top:488.00px;font-size:11px;line-height:12px;color:#000;text-shadow:0 0 .4px rgba(0,0,0,.5);">0</span>
<div class="cb" style="left:404px;top:484px;width:80px;height:22px;"></div><div class="ar" style="left:470px;top:493px;width:7px;height:4px;"></div><span class="t" style="left:409.20px;top:488.00px;font-size:11px;line-height:12px;color:#000;letter-spacing:-0.219px;text-shadow:0 0 .4px rgba(0,0,0,.5);">Constantly</span>
<div class="cb" style="left:494px;top:484px;width:70px;height:22px;"></div><div class="ar" style="left:550px;top:493px;width:7px;height:4px;"></div><span class="t" style="left:499.20px;top:488.00px;font-size:11px;line-height:12px;color:#000;letter-spacing:-0.397px;text-shadow:0 0 .4px rgba(0,0,0,.5);">Color2</span>
<div class="bt" style="left:574px;top:484px;width:75px;height:25px;"></div><div style="left:588px;top:490px;width:14px;height:14px;background:#cc0000;"></div><span class="t" style="left:607.00px;top:489.04px;font-size:13px;line-height:15px;color:#000;letter-spacing:-0.021px;text-shadow:0 0 .4px rgba(0,0,0,.5);transform:scale(1.0000,1.0800);">3:0:0</span>
<div class="bt" style="left:659px;top:484px;width:75px;height:25px;"></div><div style="left:673px;top:490px;width:14px;height:14px;background:#00cc00;"></div><span class="t" style="left:692.00px;top:489.04px;font-size:13px;line-height:15px;color:#000;letter-spacing:-0.021px;text-shadow:0 0 .4px rgba(0,0,0,.5);transform:scale(1.0000,1.0800);">0:3:0</span>
<span class="t" style="left:84.30px;top:517.00px;font-size:14px;line-height:16px;color:#e6eef4;transform:scaleX(0.8625);">2</span>
<div class="cb" style="left:112px;top:510px;width:110px;height:22px;"></div><div class="ar" style="left:208px;top:519px;width:7px;height:4px;"></div><span class="t" style="left:117.20px;top:514.00px;font-size:11px;line-height:12px;color:#000;letter-spacing:-0.347px;text-shadow:0 0 .4px rgba(0,0,0,.5);">Calibration</span>
<div class="ck" style="left:236px;top:510px;width:13px;height:13px;"></div>
<div style="left:269px;top:511px;width:56px;height:19px;background:rgba(52,76,98,.55);box-shadow:0 0 0 1px rgba(52,76,98,.25);"></div><div style="left:269px;top:530px;width:56px;height:1px;background:rgba(110,142,164,.75);box-shadow:0 1px 0 rgba(110,142,164,.3);"></div><div style="left:270px;top:512px;width:54px;height:18px;background:#8396a9;"></div><div style="left:306px;top:512px;width:1px;height:18px;background:rgba(60,85,108,.35);"></div><div style="left:307px;top:520px;width:16px;height:2px;background:rgba(60,85,108,.35);"></div><div style="left:312px;top:516px;width:7px;height:4px;border-left:3.5px solid transparent;border-right:3.5px solid transparent;border-bottom:4px solid rgba(150,180,200,.28);width:0;height:0;"></div><div style="left:312px;top:524px;width:7px;height:4px;border-left:3.5px solid transparent;border-right:3.5px solid transparent;border-top:4px solid rgba(150,180,200,.28);width:0;height:0;"></div><span class="t" style="left:271.60px;top:514.00px;font-size:11px;line-height:12px;color:#2b3d52;">0</span>
<div style="left:337px;top:511px;width:56px;height:19px;background:#34495d;box-shadow:0 0 0 1px rgba(46,68,90,.5);"></div><div style="left:337px;top:530px;width:56px;height:1px;background:#6b8ca3;box-shadow:0 1px 0 rgba(107,140,163,.45);"></div><div style="left:338px;top:512px;width:54px;height:18px;background:#e7eef1;"></div><div style="left:374px;top:512px;width:1px;height:18px;background:#c3cbcf;"></div><div style="left:375px;top:520px;width:16px;height:2px;background:#c3cbcf;"></div><div style="left:380px;top:515px;width:7px;height:4px;border-left:3.5px solid transparent;border-right:3.5px solid transparent;border-bottom:4px solid #cfe8f2;width:0;height:0;"></div><div style="left:380px;top:524px;width:7px;height:4px;border-left:3.5px solid transparent;border-right:3.5px solid transparent;border-top:4px solid #cfe8f2;width:0;height:0;"></div><span class="t" style="left:339.60px;top:514.00px;font-size:11px;line-height:12px;color:#000;text-shadow:0 0 .4px rgba(0,0,0,.5);">0</span>
<div class="cb" style="left:404px;top:510px;width:80px;height:22px;"></div><div class="ar" style="left:470px;top:519px;width:7px;height:4px;"></div><span class="t" style="left:409.20px;top:514.00px;font-size:11px;line-height:12px;color:#000;letter-spacing:-0.017px;text-shadow:0 0 .4px rgba(0,0,0,.5);">Ultra fast</span>
<div class="cb" style="left:494px;top:510px;width:70px;height:22px;"></div><div class="ar" style="left:550px;top:519px;width:7px;height:4px;"></div><span class="t" style="left:499.20px;top:514.00px;font-size:11px;line-height:12px;color:#000;letter-spacing:-0.495px;text-shadow:0 0 .4px rgba(0,0,0,.5);transform:scaleX(0.9661);">Color1</span>
<div class="bt" style="left:574px;top:510px;width:75px;height:25px;"></div><div style="left:588px;top:516px;width:14px;height:14px;background:#cc0000;"></div><span class="t" style="left:607.00px;top:515.04px;font-size:13px;line-height:15px;color:#000;letter-spacing:-0.021px;text-shadow:0 0 .4px rgba(0,0,0,.5);transform:scale(1.0000,1.0800);">3:0:0</span>
<div class="bt" style="left:659px;top:510px;width:75px;height:25px;"></div><div style="left:673px;top:516px;width:14px;height:14px;background:#00cc00;"></div><span class="t" style="left:692.00px;top:515.04px;font-size:13px;line-height:15px;color:#000;letter-spacing:-0.021px;text-shadow:0 0 .4px rgba(0,0,0,.5);transform:scale(1.0000,1.0800);">0:3:0</span>
<span class="t" style="left:84.30px;top:543.00px;font-size:14px;line-height:16px;color:#e6eef4;transform:scaleX(0.8625);">3</span>
<div class="cb" style="left:112px;top:536px;width:110px;height:22px;"></div><div class="ar" style="left:208px;top:545px;width:7px;height:4px;"></div><span class="t" style="left:117.20px;top:540.00px;font-size:11px;line-height:12px;color:#000;letter-spacing:-0.495px;text-shadow:0 0 .4px rgba(0,0,0,.5);transform:scaleX(0.9143);">SHIFT</span>
<div class="ck" style="left:236px;top:536px;width:13px;height:13px;"></div>
<div style="left:269px;top:537px;width:56px;height:19px;background:#34495d;box-shadow:0 0 0 1px rgba(46,68,90,.5);"></div><div style="left:269px;top:556px;width:56px;height:1px;background:#6b8ca3;box-shadow:0 1px 0 rgba(107,140,163,.45);"></div><div style="left:270px;top:538px;width:54px;height:18px;background:#e7eef1;"></div><div style="left:306px;top:538px;width:1px;height:18px;background:#c3cbcf;"></div><div style="left:307px;top:546px;width:16px;height:2px;background:#c3cbcf;"></div><div style="left:312px;top:541px;width:7px;height:4px;border-left:3.5px solid transparent;border-right:3.5px solid transparent;border-bottom:4px solid #cfe8f2;width:0;height:0;"></div><div style="left:312px;top:550px;width:7px;height:4px;border-left:3.5px solid transparent;border-right:3.5px solid transparent;border-top:4px solid #cfe8f2;width:0;height:0;"></div><span class="t" style="left:271.60px;top:540.00px;font-size:11px;line-height:12px;color:#000;text-shadow:0 0 .4px rgba(0,0,0,.5);">1</span>
<div style="left:337px;top:537px;width:56px;height:19px;background:#34495d;box-shadow:0 0 0 1px rgba(46,68,90,.5);"></div><div style="left:337px;top:556px;width:56px;height:1px;background:#6b8ca3;box-shadow:0 1px 0 rgba(107,140,163,.45);"></div><div style="left:338px;top:538px;width:54px;height:18px;background:#e7eef1;"></div><div style="left:374px;top:538px;width:1px;height:18px;background:#c3cbcf;"></div><div style="left:375px;top:546px;width:16px;height:2px;background:#c3cbcf;"></div><div style="left:380px;top:541px;width:7px;height:4px;border-left:3.5px solid transparent;border-right:3.5px solid transparent;border-bottom:4px solid #cfe8f2;width:0;height:0;"></div><div style="left:380px;top:550px;width:7px;height:4px;border-left:3.5px solid transparent;border-right:3.5px solid transparent;border-top:4px solid #cfe8f2;width:0;height:0;"></div><span class="t" style="left:339.60px;top:540.00px;font-size:11px;line-height:12px;color:#000;text-shadow:0 0 .4px rgba(0,0,0,.5);">0</span>
<div class="cb" style="left:404px;top:536px;width:80px;height:22px;"></div><div class="ar" style="left:470px;top:545px;width:7px;height:4px;"></div><span class="t" style="left:409.20px;top:540.00px;font-size:11px;line-height:12px;color:#000;letter-spacing:-0.219px;text-shadow:0 0 .4px rgba(0,0,0,.5);">Constantly</span>
<div class="cb" style="left:494px;top:536px;width:70px;height:22px;"></div><div class="ar" style="left:550px;top:545px;width:7px;height:4px;"></div><span class="t" style="left:499.20px;top:540.00px;font-size:11px;line-height:12px;color:#000;letter-spacing:-0.397px;text-shadow:0 0 .4px rgba(0,0,0,.5);">Color2</span>
<div class="bt" style="left:574px;top:536px;width:75px;height:25px;"></div><div style="left:588px;top:542px;width:14px;height:14px;background:#cc0000;"></div><span class="t" style="left:607.00px;top:541.04px;font-size:13px;line-height:15px;color:#000;letter-spacing:-0.021px;text-shadow:0 0 .4px rgba(0,0,0,.5);transform:scale(1.0000,1.0800);">3:0:0</span>
<div class="bt" style="left:659px;top:536px;width:75px;height:25px;"></div><div style="left:673px;top:542px;width:14px;height:14px;background:#00cc00;"></div><span class="t" style="left:692.00px;top:541.04px;font-size:13px;line-height:15px;color:#000;letter-spacing:-0.021px;text-shadow:0 0 .4px rgba(0,0,0,.5);transform:scale(1.0000,1.0800);">0:3:0</span>
<span class="t" style="left:84.30px;top:569.00px;font-size:14px;line-height:16px;color:#e6eef4;transform:scaleX(0.8625);">4</span>
<div class="cb" style="left:112px;top:562px;width:110px;height:22px;"></div><div class="ar" style="left:208px;top:571px;width:7px;height:4px;"></div><span class="t" style="left:117.20px;top:566.00px;font-size:11px;line-height:12px;color:#000;letter-spacing:-0.495px;text-shadow:0 0 .4px rgba(0,0,0,.5);transform:scaleX(0.9143);">SHIFT</span>
<div class="ck" style="left:236px;top:562px;width:13px;height:13px;"></div>
<div style="left:269px;top:563px;width:56px;height:19px;background:#34495d;box-shadow:0 0 0 1px rgba(46,68,90,.5);"></div><div style="left:269px;top:582px;width:56px;height:1px;background:#6b8ca3;box-shadow:0 1px 0 rgba(107,140,163,.45);"></div><div style="left:270px;top:564px;width:54px;height:18px;background:#e7eef1;"></div><div style="left:306px;top:564px;width:1px;height:18px;background:#c3cbcf;"></div><div style="left:307px;top:572px;width:16px;height:2px;background:#c3cbcf;"></div><div style="left:312px;top:567px;width:7px;height:4px;border-left:3.5px solid transparent;border-right:3.5px solid transparent;border-bottom:4px solid #cfe8f2;width:0;height:0;"></div><div style="left:312px;top:576px;width:7px;height:4px;border-left:3.5px solid transparent;border-right:3.5px solid transparent;border-top:4px solid #cfe8f2;width:0;height:0;"></div><span class="t" style="left:271.60px;top:566.00px;font-size:11px;line-height:12px;color:#000;text-shadow:0 0 .4px rgba(0,0,0,.5);">2</span>
<div style="left:337px;top:563px;width:56px;height:19px;background:#34495d;box-shadow:0 0 0 1px rgba(46,68,90,.5);"></div><div style="left:337px;top:582px;width:56px;height:1px;background:#6b8ca3;box-shadow:0 1px 0 rgba(107,140,163,.45);"></div><div style="left:338px;top:564px;width:54px;height:18px;background:#e7eef1;"></div><div style="left:374px;top:564px;width:1px;height:18px;background:#c3cbcf;"></div><div style="left:375px;top:572px;width:16px;height:2px;background:#c3cbcf;"></div><div style="left:380px;top:567px;width:7px;height:4px;border-left:3.5px solid transparent;border-right:3.5px solid transparent;border-bottom:4px solid #cfe8f2;width:0;height:0;"></div><div style="left:380px;top:576px;width:7px;height:4px;border-left:3.5px solid transparent;border-right:3.5px solid transparent;border-top:4px solid #cfe8f2;width:0;height:0;"></div><span class="t" style="left:339.60px;top:566.00px;font-size:11px;line-height:12px;color:#000;text-shadow:0 0 .4px rgba(0,0,0,.5);">0</span>
<div class="cb" style="left:404px;top:562px;width:80px;height:22px;"></div><div class="ar" style="left:470px;top:571px;width:7px;height:4px;"></div><span class="t" style="left:409.20px;top:566.00px;font-size:11px;line-height:12px;color:#000;letter-spacing:-0.219px;text-shadow:0 0 .4px rgba(0,0,0,.5);">Constantly</span>
<div class="cb" style="left:494px;top:562px;width:70px;height:22px;"></div><div class="ar" style="left:550px;top:571px;width:7px;height:4px;"></div><span class="t" style="left:499.20px;top:566.00px;font-size:11px;line-height:12px;color:#000;letter-spacing:-0.209px;text-shadow:0 0 .4px rgba(0,0,0,.5);">Color1/2</span>
<div class="bt" style="left:574px;top:562px;width:75px;height:25px;"></div><div style="left:588px;top:568px;width:14px;height:14px;background:#cc0000;"></div><span class="t" style="left:607.00px;top:567.04px;font-size:13px;line-height:15px;color:#000;letter-spacing:-0.021px;text-shadow:0 0 .4px rgba(0,0,0,.5);transform:scale(1.0000,1.0800);">3:0:0</span>
<div class="bt" style="left:659px;top:562px;width:75px;height:25px;"></div><div style="left:673px;top:568px;width:14px;height:14px;background:#00cc00;"></div><span class="t" style="left:692.00px;top:567.04px;font-size:13px;line-height:15px;color:#000;letter-spacing:-0.021px;text-shadow:0 0 .4px rgba(0,0,0,.5);transform:scale(1.0000,1.0800);">0:3:0</span>
<span class="t" style="left:84.30px;top:595.00px;font-size:14px;line-height:16px;color:#e6eef4;transform:scaleX(0.8625);">5</span>
<div class="cb" style="left:112px;top:588px;width:110px;height:22px;"></div><div class="ar" style="left:208px;top:597px;width:7px;height:4px;"></div><span class="t" style="left:117.20px;top:592.00px;font-size:11px;line-height:12px;color:#000;letter-spacing:-0.071px;text-shadow:0 0 .4px rgba(0,0,0,.5);">Fix Axis</span>
<div class="ck" style="left:236px;top:588px;width:13px;height:13px;"></div>
<div style="left:269px;top:589px;width:56px;height:19px;background:rgba(52,76,98,.55);box-shadow:0 0 0 1px rgba(52,76,98,.25);"></div><div style="left:269px;top:608px;width:56px;height:1px;background:rgba(110,142,164,.75);box-shadow:0 1px 0 rgba(110,142,164,.3);"></div><div style="left:270px;top:590px;width:54px;height:18px;background:#8396a9;"></div><div style="left:306px;top:590px;width:1px;height:18px;background:rgba(60,85,108,.35);"></div><div style="left:307px;top:598px;width:16px;height:2px;background:rgba(60,85,108,.35);"></div><div style="left:312px;top:594px;width:7px;height:4px;border-left:3.5px solid transparent;border-right:3.5px solid transparent;border-bottom:4px solid rgba(150,180,200,.28);width:0;height:0;"></div><div style="left:312px;top:602px;width:7px;height:4px;border-left:3.5px solid transparent;border-right:3.5px solid transparent;border-top:4px solid rgba(150,180,200,.28);width:0;height:0;"></div><span class="t" style="left:271.60px;top:592.00px;font-size:11px;line-height:12px;color:#2b3d52;">0</span>
<div style="left:337px;top:589px;width:56px;height:19px;background:#34495d;box-shadow:0 0 0 1px rgba(46,68,90,.5);"></div><div style="left:337px;top:608px;width:56px;height:1px;background:#6b8ca3;box-shadow:0 1px 0 rgba(107,140,163,.45);"></div><div style="left:338px;top:590px;width:54px;height:18px;background:#e7eef1;"></div><div style="left:374px;top:590px;width:1px;height:18px;background:#c3cbcf;"></div><div style="left:375px;top:598px;width:16px;height:2px;background:#c3cbcf;"></div><div style="left:380px;top:593px;width:7px;height:4px;border-left:3.5px solid transparent;border-right:3.5px solid transparent;border-bottom:4px solid #cfe8f2;width:0;height:0;"></div><div style="left:380px;top:602px;width:7px;height:4px;border-left:3.5px solid transparent;border-right:3.5px solid transparent;border-top:4px solid #cfe8f2;width:0;height:0;"></div><span class="t" style="left:339.60px;top:592.00px;font-size:11px;line-height:12px;color:#000;text-shadow:0 0 .4px rgba(0,0,0,.5);">0</span>
<div class="cb" style="left:404px;top:588px;width:80px;height:22px;"></div><div class="ar" style="left:470px;top:597px;width:7px;height:4px;"></div><span class="t" style="left:409.20px;top:592.00px;font-size:11px;line-height:12px;color:#000;letter-spacing:-0.319px;text-shadow:0 0 .4px rgba(0,0,0,.5);">Fast blink</span>
<div class="cb" style="left:494px;top:588px;width:70px;height:22px;"></div><div class="ar" style="left:550px;top:597px;width:7px;height:4px;"></div><span class="t" style="left:499.20px;top:592.00px;font-size:11px;line-height:12px;color:#000;letter-spacing:-0.209px;text-shadow:0 0 .4px rgba(0,0,0,.5);">Color1/2</span>
<div class="bt" style="left:574px;top:588px;width:75px;height:25px;"></div><div style="left:588px;top:594px;width:14px;height:14px;background:#cc0000;"></div><span class="t" style="left:607.00px;top:593.04px;font-size:13px;line-height:15px;color:#000;letter-spacing:-0.021px;text-shadow:0 0 .4px rgba(0,0,0,.5);transform:scale(1.0000,1.0800);">3:0:0</span>
<div class="bt" style="left:659px;top:588px;width:75px;height:25px;"></div><div style="left:673px;top:594px;width:14px;height:14px;background:#00cc00;"></div><span class="t" style="left:692.00px;top:593.04px;font-size:13px;line-height:15px;color:#000;letter-spacing:-0.021px;text-shadow:0 0 .4px rgba(0,0,0,.5);transform:scale(1.0000,1.0800);">0:3:0</span>
<span class="t" style="left:84.30px;top:621.00px;font-size:14px;line-height:16px;color:#e6eef4;transform:scaleX(0.8625);">6</span>
<div class="cb" style="left:112px;top:614px;width:110px;height:22px;"></div><div class="ar" style="left:208px;top:623px;width:7px;height:4px;"></div><span class="t" style="left:117.20px;top:618.00px;font-size:11px;line-height:12px;color:#000;letter-spacing:-0.193px;text-shadow:0 0 .4px rgba(0,0,0,.5);">Physical Button</span>
<div class="ckw" style="left:236px;top:614px;width:13px;height:13px;"></div>
<div style="left:269px;top:615px;width:56px;height:19px;background:#34495d;box-shadow:0 0 0 1px rgba(46,68,90,.5);"></div><div style="left:269px;top:634px;width:56px;height:1px;background:#6b8ca3;box-shadow:0 1px 0 rgba(107,140,163,.45);"></div><div style="left:270px;top:616px;width:54px;height:18px;background:#e7eef1;"></div><div style="left:306px;top:616px;width:1px;height:18px;background:#c3cbcf;"></div><div style="left:307px;top:624px;width:16px;height:2px;background:#c3cbcf;"></div><div style="left:312px;top:619px;width:7px;height:4px;border-left:3.5px solid transparent;border-right:3.5px solid transparent;border-bottom:4px solid #cfe8f2;width:0;height:0;"></div><div style="left:312px;top:628px;width:7px;height:4px;border-left:3.5px solid transparent;border-right:3.5px solid transparent;border-top:4px solid #cfe8f2;width:0;height:0;"></div><span class="t" style="left:271.60px;top:618.00px;font-size:11px;line-height:12px;color:#000;text-shadow:0 0 .4px rgba(0,0,0,.5);">1</span>
<div style="left:337px;top:615px;width:56px;height:19px;background:#34495d;box-shadow:0 0 0 1px rgba(46,68,90,.5);"></div><div style="left:337px;top:634px;width:56px;height:1px;background:#6b8ca3;box-shadow:0 1px 0 rgba(107,140,163,.45);"></div><div style="left:338px;top:616px;width:54px;height:18px;background:#e7eef1;"></div><div style="left:374px;top:616px;width:1px;height:18px;background:#c3cbcf;"></div><div style="left:375px;top:624px;width:16px;height:2px;background:#c3cbcf;"></div><div style="left:380px;top:619px;width:7px;height:4px;border-left:3.5px solid transparent;border-right:3.5px solid transparent;border-bottom:4px solid #cfe8f2;width:0;height:0;"></div><div style="left:380px;top:628px;width:7px;height:4px;border-left:3.5px solid transparent;border-right:3.5px solid transparent;border-top:4px solid #cfe8f2;width:0;height:0;"></div><span class="t" style="left:339.60px;top:618.00px;font-size:11px;line-height:12px;color:#000;text-shadow:0 0 .4px rgba(0,0,0,.5);">88</span>
<div class="cb" style="left:404px;top:614px;width:80px;height:22px;"></div><div class="ar" style="left:470px;top:623px;width:7px;height:4px;"></div><span class="t" style="left:409.20px;top:618.00px;font-size:11px;line-height:12px;color:#000;letter-spacing:-0.219px;text-shadow:0 0 .4px rgba(0,0,0,.5);">Constantly</span>
<div class="cb" style="left:494px;top:614px;width:70px;height:22px;"></div><div class="ar" style="left:550px;top:623px;width:7px;height:4px;"></div><span class="t" style="left:499.20px;top:618.00px;font-size:11px;line-height:12px;color:#000;letter-spacing:-0.397px;text-shadow:0 0 .4px rgba(0,0,0,.5);">Color2</span>
<div class="bt" style="left:574px;top:614px;width:75px;height:25px;"></div><div style="left:588px;top:620px;width:14px;height:14px;background:#666666;"></div><span class="t" style="left:607.00px;top:619.04px;font-size:13px;line-height:15px;color:#000;letter-spacing:-0.021px;text-shadow:0 0 .4px rgba(0,0,0,.5);transform:scale(1.0000,1.0800);">0:0:0</span>
<div class="bt" style="left:659px;top:614px;width:75px;height:25px;"></div><div style="left:673px;top:620px;width:14px;height:14px;background:#c0c0c0;"></div><span class="t" style="left:692.00px;top:619.04px;font-size:13px;line-height:15px;color:#000;letter-spacing:-0.021px;text-shadow:0 0 .4px rgba(0,0,0,.5);transform:scale(1.0000,1.0800);">1:1:1</span>
<span class="t" style="left:84.30px;top:647.00px;font-size:14px;line-height:16px;color:#e6eef4;transform:scaleX(0.8625);">7</span>
<div class="cb" style="left:112px;top:640px;width:110px;height:22px;"></div><div class="ar" style="left:208px;top:649px;width:7px;height:4px;"></div><span class="t" style="left:117.20px;top:644.00px;font-size:11px;line-height:12px;color:#000;letter-spacing:-0.101px;text-shadow:0 0 .4px rgba(0,0,0,.5);">External</span>
<div class="ck" style="left:236px;top:640px;width:13px;height:13px;"></div>
<div style="left:269px;top:641px;width:56px;height:19px;background:rgba(52,76,98,.55);box-shadow:0 0 0 1px rgba(52,76,98,.25);"></div><div style="left:269px;top:660px;width:56px;height:1px;background:rgba(110,142,164,.75);box-shadow:0 1px 0 rgba(110,142,164,.3);"></div><div style="left:270px;top:642px;width:54px;height:18px;background:#8396a9;"></div><div style="left:306px;top:642px;width:1px;height:18px;background:rgba(60,85,108,.35);"></div><div style="left:307px;top:650px;width:16px;height:2px;background:rgba(60,85,108,.35);"></div><div style="left:312px;top:646px;width:7px;height:4px;border-left:3.5px solid transparent;border-right:3.5px solid transparent;border-bottom:4px solid rgba(150,180,200,.28);width:0;height:0;"></div><div style="left:312px;top:654px;width:7px;height:4px;border-left:3.5px solid transparent;border-right:3.5px solid transparent;border-top:4px solid rgba(150,180,200,.28);width:0;height:0;"></div><span class="t" style="left:271.60px;top:644.00px;font-size:11px;line-height:12px;color:#2b3d52;">0</span>
<div style="left:337px;top:641px;width:56px;height:19px;background:#34495d;box-shadow:0 0 0 1px rgba(46,68,90,.5);"></div><div style="left:337px;top:660px;width:56px;height:1px;background:#6b8ca3;box-shadow:0 1px 0 rgba(107,140,163,.45);"></div><div style="left:338px;top:642px;width:54px;height:18px;background:#e7eef1;"></div><div style="left:374px;top:642px;width:1px;height:18px;background:#c3cbcf;"></div><div style="left:375px;top:650px;width:16px;height:2px;background:#c3cbcf;"></div><div style="left:380px;top:645px;width:7px;height:4px;border-left:3.5px solid transparent;border-right:3.5px solid transparent;border-bottom:4px solid #cfe8f2;width:0;height:0;"></div><div style="left:380px;top:654px;width:7px;height:4px;border-left:3.5px solid transparent;border-right:3.5px solid transparent;border-top:4px solid #cfe8f2;width:0;height:0;"></div><span class="t" style="left:339.60px;top:644.00px;font-size:11px;line-height:12px;color:#000;text-shadow:0 0 .4px rgba(0,0,0,.5);">0</span>
<div class="cb" style="left:404px;top:640px;width:80px;height:22px;"></div><div class="ar" style="left:470px;top:649px;width:7px;height:4px;"></div><span class="t" style="left:409.20px;top:644.00px;font-size:11px;line-height:12px;color:#000;letter-spacing:-0.495px;text-shadow:0 0 .4px rgba(0,0,0,.5);transform:scaleX(0.9208);">OFF</span>
<div class="cb" style="left:494px;top:640px;width:70px;height:22px;"></div><div class="ar" style="left:550px;top:649px;width:7px;height:4px;"></div><span class="t" style="left:499.20px;top:644.00px;font-size:11px;line-height:12px;color:#000;letter-spacing:-0.495px;text-shadow:0 0 .4px rgba(0,0,0,.5);transform:scaleX(0.9661);">Color1</span>
<div class="bt" style="left:574px;top:640px;width:75px;height:25px;"></div><div style="left:588px;top:646px;width:14px;height:14px;background:#666666;"></div><span class="t" style="left:607.00px;top:645.04px;font-size:13px;line-height:15px;color:#000;letter-spacing:-0.021px;text-shadow:0 0 .4px rgba(0,0,0,.5);transform:scale(1.0000,1.0800);">0:0:0</span>
<div class="bt" style="left:659px;top:640px;width:75px;height:25px;"></div><div style="left:673px;top:646px;width:14px;height:14px;background:#666666;"></div><span class="t" style="left:692.00px;top:645.04px;font-size:13px;line-height:15px;color:#000;letter-spacing:-0.021px;text-shadow:0 0 .4px rgba(0,0,0,.5);transform:scale(1.0000,1.0800);">0:0:0</span>
<span class="t" style="left:84.30px;top:673.00px;font-size:14px;line-height:16px;color:#e6eef4;transform:scaleX(0.8625);">8</span>
<div class="cb" style="left:112px;top:666px;width:110px;height:22px;"></div><div class="ar" style="left:208px;top:675px;width:7px;height:4px;"></div><span class="t" style="left:117.20px;top:670.00px;font-size:11px;line-height:12px;color:#000;letter-spacing:-0.101px;text-shadow:0 0 .4px rgba(0,0,0,.5);">External</span>
<div class="ck" style="left:236px;top:666px;width:13px;height:13px;"></div>
<div style="left:269px;top:667px;width:56px;height:19px;background:rgba(52,76,98,.55);box-shadow:0 0 0 1px rgba(52,76,98,.25);"></div><div style="left:269px;top:686px;width:56px;height:1px;background:rgba(110,142,164,.75);box-shadow:0 1px 0 rgba(110,142,164,.3);"></div><div style="left:270px;top:668px;width:54px;height:18px;background:#8396a9;"></div><div style="left:306px;top:668px;width:1px;height:18px;background:rgba(60,85,108,.35);"></div><div style="left:307px;top:676px;width:16px;height:2px;background:rgba(60,85,108,.35);"></div><div style="left:312px;top:672px;width:7px;height:4px;border-left:3.5px solid transparent;border-right:3.5px solid transparent;border-bottom:4px solid rgba(150,180,200,.28);width:0;height:0;"></div><div style="left:312px;top:680px;width:7px;height:4px;border-left:3.5px solid transparent;border-right:3.5px solid transparent;border-top:4px solid rgba(150,180,200,.28);width:0;height:0;"></div><span class="t" style="left:271.60px;top:670.00px;font-size:11px;line-height:12px;color:#2b3d52;">0</span>
<div style="left:337px;top:667px;width:56px;height:19px;background:#34495d;box-shadow:0 0 0 1px rgba(46,68,90,.5);"></div><div style="left:337px;top:686px;width:56px;height:1px;background:#6b8ca3;box-shadow:0 1px 0 rgba(107,140,163,.45);"></div><div style="left:338px;top:668px;width:54px;height:18px;background:#e7eef1;"></div><div style="left:374px;top:668px;width:1px;height:18px;background:#c3cbcf;"></div><div style="left:375px;top:676px;width:16px;height:2px;background:#c3cbcf;"></div><div style="left:380px;top:671px;width:7px;height:4px;border-left:3.5px solid transparent;border-right:3.5px solid transparent;border-bottom:4px solid #cfe8f2;width:0;height:0;"></div><div style="left:380px;top:680px;width:7px;height:4px;border-left:3.5px solid transparent;border-right:3.5px solid transparent;border-top:4px solid #cfe8f2;width:0;height:0;"></div><span class="t" style="left:339.60px;top:670.00px;font-size:11px;line-height:12px;color:#000;text-shadow:0 0 .4px rgba(0,0,0,.5);">0</span>
<div class="cb" style="left:404px;top:666px;width:80px;height:22px;"></div><div class="ar" style="left:470px;top:675px;width:7px;height:4px;"></div><span class="t" style="left:409.20px;top:670.00px;font-size:11px;line-height:12px;color:#000;letter-spacing:-0.495px;text-shadow:0 0 .4px rgba(0,0,0,.5);transform:scaleX(0.9208);">OFF</span>
<div class="cb" style="left:494px;top:666px;width:70px;height:22px;"></div><div class="ar" style="left:550px;top:675px;width:7px;height:4px;"></div><span class="t" style="left:499.20px;top:670.00px;font-size:11px;line-height:12px;color:#000;letter-spacing:-0.495px;text-shadow:0 0 .4px rgba(0,0,0,.5);transform:scaleX(0.9661);">Color1</span>
<div class="bt" style="left:574px;top:666px;width:75px;height:25px;"></div><div style="left:588px;top:672px;width:14px;height:14px;background:#666666;"></div><span class="t" style="left:607.00px;top:671.04px;font-size:13px;line-height:15px;color:#000;letter-spacing:-0.021px;text-shadow:0 0 .4px rgba(0,0,0,.5);transform:scale(1.0000,1.0800);">0:0:0</span>
<div class="bt" style="left:659px;top:666px;width:75px;height:25px;"></div><div style="left:673px;top:672px;width:14px;height:14px;background:#666666;"></div><span class="t" style="left:692.00px;top:671.04px;font-size:13px;line-height:15px;color:#000;letter-spacing:-0.021px;text-shadow:0 0 .4px rgba(0,0,0,.5);transform:scale(1.0000,1.0800);">0:0:0</span>
<div style="left:491.5px;top:463px;width:80px;height:47.5px;border:4px solid #ff8127;border-radius:11px;"></div>
</div>
</body>
</html>
